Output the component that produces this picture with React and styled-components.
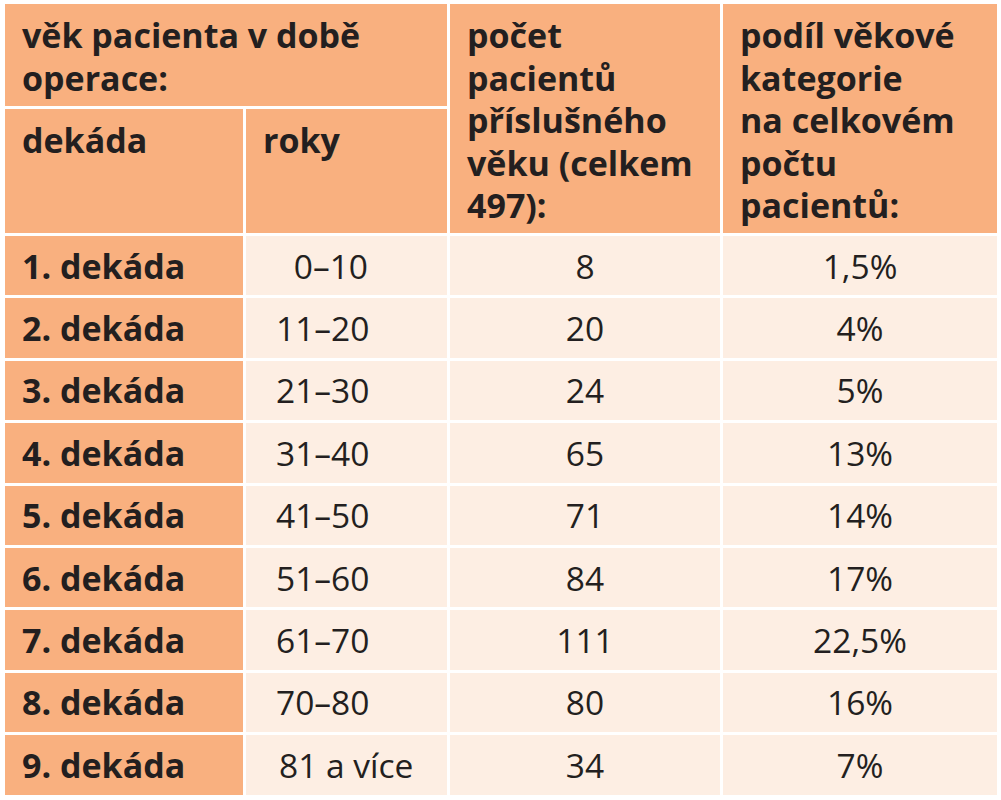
import React from "react";
import styled, { createGlobalStyle } from "styled-components";

const Global = createGlobalStyle`
  html, body { margin: 0; padding: 0; background: #ffffff; }
  body { font-family: "Open Sans", "Liberation Sans", sans-serif; color: #231f20; }
`;

const Page = styled.div`
  padding: 4px 4px 0 5px;
`;

const Grid = styled.div`
  display: grid;
  grid-template-columns: 238px 201px 270px 274px;
  grid-template-rows: 102px 124px repeat(9, 59.4px);
  gap: 3px;
  background: #ffffff;
  width: 992px;
`;

const HeadCell = styled.div`
  background: #f9b07f;
  font-weight: 700;
  font-size: 34px;
  line-height: 42.5px;
  padding: 10px 6px 0 17px;
  grid-column: ${(p) => p.$col || "auto"};
  grid-row: ${(p) => p.$row || "auto"};
`;

const LabelCell = styled.div`
  background: #f9b07f;
  font-weight: 700;
  font-size: 34px;
  display: flex;
  align-items: center;
  padding-left: 17px;
`;

const ValueCell = styled.div`
  background: #fdeee3;
  font-size: 33.5px;
  display: flex;
  align-items: center;
  justify-content: ${(p) => (p.$center ? "center" : "flex-start")};
  padding-left: ${(p) => (p.$center ? "0" : "30px")};
`;

const Range = styled.span`
  display: inline-block;
  min-width: ${(p) => (p.$free ? "0" : "92px")};
  text-align: ${(p) => (p.$free ? "left" : "right")};
  padding-left: ${(p) => (p.$free ? "3px" : "0")};
`;

const rows = [
  ["1. dekáda", "0–10", "8", "1,5%"],
  ["2. dekáda", "11–20", "20", "4%"],
  ["3. dekáda", "21–30", "24", "5%"],
  ["4. dekáda", "31–40", "65", "13%"],
  ["5. dekáda", "41–50", "71", "14%"],
  ["6. dekáda", "51–60", "84", "17%"],
  ["7. dekáda", "61–70", "111", "22,5%"],
  ["8. dekáda", "70–80", "80", "16%"],
  ["9. dekáda", "81 a více", "34", "7%"],
];

export default function App() {
  return (
    <Page>
      <Global />
      <Grid>
        <HeadCell $col="1 / 3" $row="1">
          věk pacienta v době
          <br />
          operace:
        </HeadCell>
        <HeadCell $col="3" $row="1 / 3">
          počet
          <br />
          pacientů
          <br />
          příslušného
          <br />
          věku (celkem
          <br />
          497):
        </HeadCell>
        <HeadCell $col="4" $row="1 / 3">
          podíl věkové
          <br />
          kategorie
          <br />
          na celkovém
          <br />
          počtu
          <br />
          pacientů:
        </HeadCell>
        <HeadCell $col="1" $row="2">dekáda</HeadCell>
        <HeadCell $col="2" $row="2">roky</HeadCell>
        {rows.map(([label, range, count, share]) => (
          <React.Fragment key={label}>
            <LabelCell>{label}</LabelCell>
            <ValueCell>
              <Range $free={range.includes("a")}>{range}</Range>
            </ValueCell>
            <ValueCell $center>{count}</ValueCell>
            <ValueCell $center>{share}</ValueCell>
          </React.Fragment>
        ))}
      </Grid>
    </Page>
  );
}
